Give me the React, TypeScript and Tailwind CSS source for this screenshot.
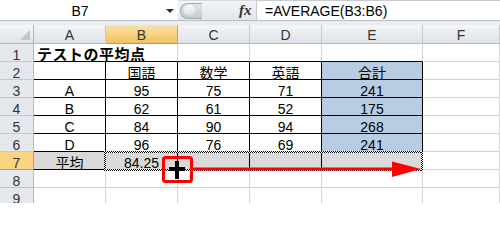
import React from "react";

const FONT = { fontFamily: '"Liberation Sans", "Noto Sans CJK JP", sans-serif' };

type Row = { n: number; cells: string[] };

const rows: Row[] = [
  { n: 1, cells: ["テストの平均点", "", "", "", "", ""] },
  { n: 2, cells: ["", "国語", "数学", "英語", "合計", ""] },
  { n: 3, cells: ["A", "95", "75", "71", "241", ""] },
  { n: 4, cells: ["B", "62", "61", "52", "175", ""] },
  { n: 5, cells: ["C", "84", "90", "94", "268", ""] },
  { n: 6, cells: ["D", "96", "76", "69", "241", ""] },
  { n: 7, cells: ["平均", "84.25", "", "", "", ""] },
  { n: 8, cells: ["", "", "", "", "", ""] },
  { n: 9, cells: ["", "", "", "", "", ""] },
];

const colLetters = ["A", "B", "C", "D", "E", "F"];

function cellClass(r: number, c: number): string {
  const inTable = r >= 2 && r <= 7 && c <= 4;
  const parts: string[] = [
    "h-[18px] border-r border-b pt-[4px] text-[14px] leading-[14px] text-black whitespace-nowrap flex justify-center",
  ];
  if (inTable) {
    parts.push("border-r-black border-b-black");
  } else if (r === 1 && c <= 4) {
    parts.push(c === 0 ? "border-r-transparent border-b-black" : "border-r-[#d4d4d4] border-b-black");
  } else {
    parts.push("border-r-[#d4d4d4] border-b-[#d4d4d4]");
  }
  if (r === 7 && c <= 4) parts.push("bg-[#d9d9d9]");
  else if (r >= 2 && r <= 6 && c === 4) parts.push("bg-[#b8cce4]");
  else parts.push("bg-white");
  if (r === 1 && c === 0)
    parts.push("justify-start pl-[3px] overflow-visible relative z-10 font-bold text-[15px] pt-[3px] tracking-[0.5px]");
  return parts.join(" ");
}

export default function App() {
  return (
    <div className="relative w-[500px] h-[203px] overflow-hidden bg-white" style={FONT}>
      {/* Formula bar */}
      <div className="flex h-[20px] bg-white">
        <div className="relative w-[178px] flex items-center bg-white">
          <span className="w-[160px] text-center text-[14px] leading-[14px] pt-[1px] text-black">B7</span>
          <span className="absolute left-[166px] top-[9px] w-0 h-0 border-l-[4px] border-r-[4px] border-t-[4px] border-l-transparent border-r-transparent border-t-[#333]"></span>
        </div>
        <div className="w-[78px] flex items-center bg-[linear-gradient(#f3f4f6,#e3e6ea)] border-t border-[#d5d9de]">
          <div className="ml-[2px] w-[22px] h-[16px] rounded-l-full border border-r-0 border-[#a2a9b2] bg-[linear-gradient(#e3e6ea,#c4c9cf)] flex items-center pl-[3px]">
            <div className="w-[11px] h-[11px] rounded-full bg-[linear-gradient(#ffffff,#d6dade)]"></div>
          </div>
          <span
            className="ml-[37px] text-[15px] leading-[15px] italic font-bold text-[#333]"
            style={{ fontFamily: '"Liberation Serif", serif' }}
          >
            fx
          </span>
        </div>
        <div className="flex-1 border-l border-t border-[#c6cbd1] flex items-center pl-[8px] bg-white">
          <span className="text-[14px] leading-[14px] pt-[1px] text-black">=AVERAGE(B3:B6)</span>
        </div>
      </div>
      <div className="h-[5px] border-t border-[#b9bec5] bg-[#e9ecf0]"></div>

      {/* Sheet */}
      <div className="relative grid grid-cols-[34px_72px_72px_72px_72px_101px_77px]">
        {/* Header row */}
        <div className="h-[19px] border-r border-b border-[#b4b9c0] bg-[linear-gradient(#f3f5f7,#dfe3e8)] relative">
          <svg className="absolute right-[3px] bottom-[3px]" width="10" height="10" viewBox="0 0 10 10">
            <polygon points="10,0 10,10 0,10" fill="#c1c5ca" />
          </svg>
        </div>
        {colLetters.map((l) => (
          <div
            key={l}
            className={
              l === "B"
                ? "h-[19px] border-r border-b border-r-[#c9a455] border-b-[#c29b4a] bg-[linear-gradient(#fbe3a8,#f1c15f)] flex justify-center pt-[3px] text-[14px] leading-[14px] text-[#333]"
                : "h-[19px] border-r border-b border-r-[#c5c9cf] border-b-[#b4b9c0] bg-[linear-gradient(#f3f5f7,#dfe3e8)] flex justify-center pt-[3px] text-[14px] leading-[14px] text-[#333]"
            }
          >
            {l}
          </div>
        ))}

        {rows.map((row) => (
          <React.Fragment key={row.n}>
            <div
              className={
                row.n === 7
                  ? "h-[18px] border-r border-b border-r-[#c29b4a] border-b-[#c29b4a] bg-[#f8d57e] flex justify-center pt-[4px] text-[14px] leading-[14px] text-[#333]"
                  : "h-[18px] border-r border-b border-r-[#b4b9c0] border-b-[#c5c9cf] bg-[#e4e8ed] flex justify-center pt-[4px] text-[14px] leading-[14px] text-[#333]"
              }
            >
              {row.n}
            </div>
            {row.cells.map((v, c) => (
              <div key={c} className={cellClass(row.n, c)}>
                {v}
              </div>
            ))}
          </React.Fragment>
        ))}

        {/* marching ants around B7:E7 */}
        <div className="absolute left-[104px] top-[126px] w-[319px] h-[20px] pointer-events-none">
          <div className="absolute left-0 top-0 w-full h-[2px] bg-[repeating-conic-gradient(#000_0_25%,#fff_0_50%)] bg-[length:2px_2px]"></div>
          <div className="absolute left-0 bottom-0 w-full h-[2px] bg-[repeating-conic-gradient(#000_0_25%,#fff_0_50%)] bg-[length:2px_2px]"></div>
          <div className="absolute left-0 top-0 w-[2px] h-full bg-[repeating-conic-gradient(#000_0_25%,#fff_0_50%)] bg-[length:2px_2px]"></div>
          <div className="absolute right-0 top-0 w-[2px] h-full bg-[repeating-conic-gradient(#000_0_25%,#fff_0_50%)] bg-[length:2px_2px]"></div>
        </div>
      </div>

      {/* Annotation overlay */}
      <svg className="absolute left-0 top-0 pointer-events-none" width="500" height="203" viewBox="0 0 500 203">
        <rect x="163.5" y="157.5" width="28" height="24" rx="2" fill="none" stroke="#ff0000" strokeWidth="3" />
        <rect x="193" y="167.5" width="201" height="3" fill="#ff0000" />
        <polygon points="392,161.5 421,169 392,177" fill="#ff0000" />
        <rect x="169" y="167" width="16" height="4" fill="#000" />
        <rect x="175" y="161" width="4" height="18" fill="#000" />
      </svg>
    </div>
  );
}
